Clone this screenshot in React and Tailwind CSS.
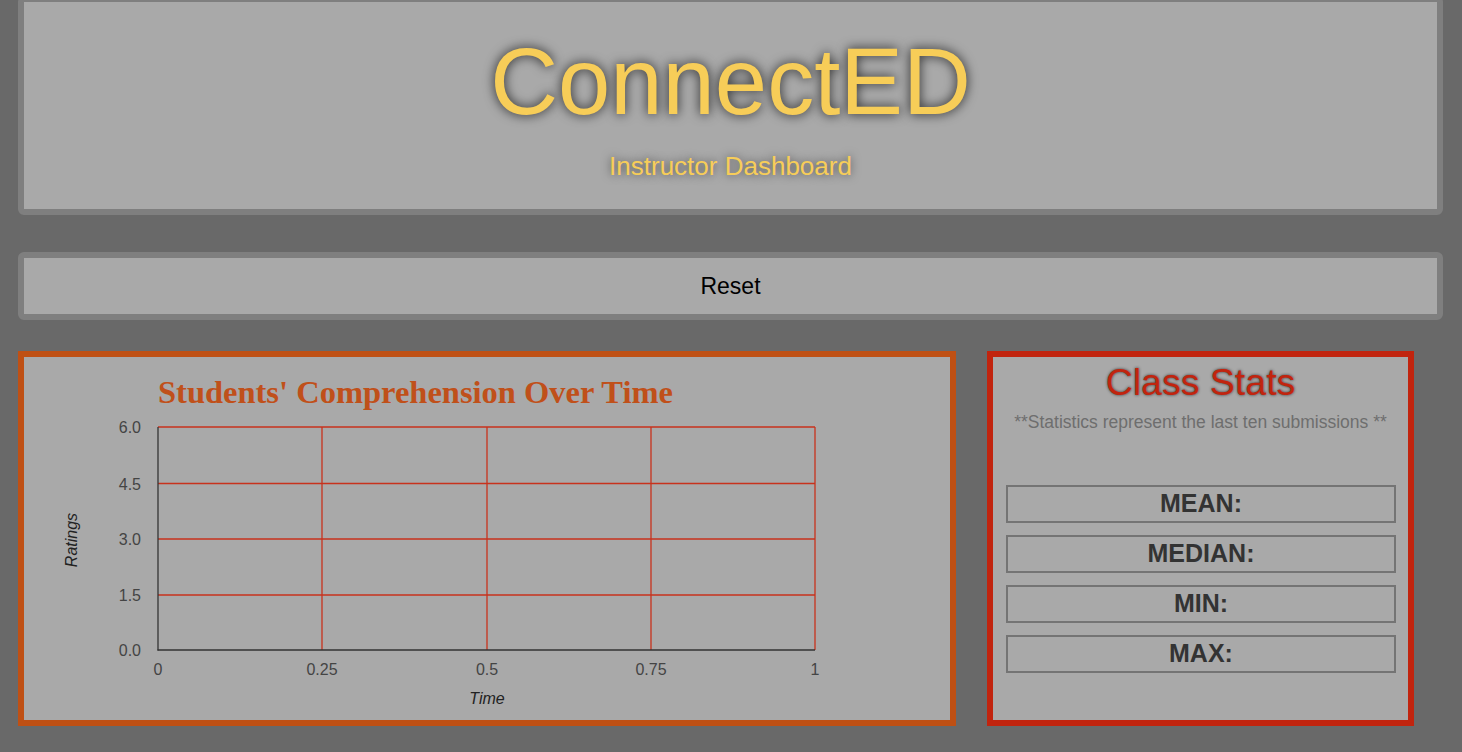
import React from 'react';

const yTicks = [
    { label: '6.0', y: 70 },
    { label: '4.5', y: 126.5 },
    { label: '3.0', y: 182 },
    { label: '1.5', y: 238 },
    { label: '0.0', y: 293 },
];

const xTicks = [
    { label: '0', x: 134 },
    { label: '0.25', x: 298 },
    { label: '0.5', x: 463 },
    { label: '0.75', x: 627 },
    { label: '1', x: 791 },
];

const ComprehensionChart = () => {
    return (
        <svg width="926" height="363" viewBox="0 0 926 363" className="block">
            <text x="134" y="46" fontFamily="'Liberation Serif', serif" fontWeight="bold" fontSize="32.5" fill="#c0501a">
                Students' Comprehension Over Time
            </text>

            {/* grid */}
            {yTicks.slice(0, 4).map((t) => (
                <line key={t.label} x1="134" x2="791" y1={t.y} y2={t.y} stroke="#c8321c" strokeWidth="1.3" />
            ))}
            {xTicks.slice(1).map((t) => (
                <line key={t.label} x1={t.x} x2={t.x} y1="70" y2="293" stroke="#c8321c" strokeWidth="1.3" />
            ))}

            {/* axes */}
            <line x1="134" x2="134" y1="70" y2="293.5" stroke="#333" strokeWidth="1.3" />
            <line x1="133.5" x2="791" y1="293" y2="293" stroke="#333" strokeWidth="1.3" />

            {yTicks.map((t) => (
                <text key={t.label} x="117" y={t.y + 6} textAnchor="end" fontFamily="'Liberation Sans', Arial, sans-serif" fontSize="16" fill="#444">
                    {t.label}
                </text>
            ))}
            {xTicks.map((t) => (
                <text key={t.label} x={t.x} y="318" textAnchor="middle" fontFamily="'Liberation Sans', Arial, sans-serif" fontSize="16" fill="#444">
                    {t.label}
                </text>
            ))}

            <text x="463" y="347" textAnchor="middle" fontFamily="'Liberation Sans', Arial, sans-serif" fontStyle="italic" fontSize="16" fill="#222">
                Time
            </text>
            <text
                x="0"
                y="0"
                transform="translate(53 183) rotate(-90)"
                textAnchor="middle"
                fontFamily="'Liberation Sans', Arial, sans-serif"
                fontStyle="italic"
                fontSize="16"
                fill="#222"
            >
                Ratings
            </text>
        </svg>
    );
};

const StatBox = ({ label }) => (
    <div className="h-[38px] border-2 border-[#747474] flex items-center justify-center text-[25px] font-bold text-[#333]">
        {label}
    </div>
);

const App = () => {
    return (
        <div className="bg-[#696969] min-h-screen h-[752px] overflow-hidden font-['Liberation_Sans',Arial,sans-serif]">
            {/* Header */}
            <div className="-mt-1 ml-[18px] mr-[19px] border-[6px] border-[#7f7f7f] rounded-md bg-[#a9a9a9] h-[219px] flex flex-col items-center">
                <h1 className="mt-[23px] text-[94px] leading-[114px] text-[#f7cd58] [text-shadow:0_0_12px_rgba(0,0,0,0.8)]">
                    ConnectED
                </h1>
                <p className="mt-[13px] text-[26px] leading-[28px] text-[#f7cd58] [text-shadow:0_0_10px_rgba(0,0,0,0.6)]">
                    Instructor Dashboard
                </p>
            </div>

            {/* Reset */}
            <div className="mt-[37px] ml-[18px] mr-[19px] border-[6px] border-[#7f7f7f] rounded-md bg-[#a9a9a9] h-[68px] flex items-center justify-center">
                <button className="text-[23px] text-black">Reset</button>
            </div>

            {/* Panels */}
            <div className="mt-[31px] ml-[18px] flex gap-[31px]">
                <div className="w-[938px] h-[375px] border-[6px] border-[#bf5014] bg-[#a9a9a9]">
                    <ComprehensionChart />
                </div>

                <div className="w-[427px] h-[375px] border-[6px] border-[#c1240e] bg-[#a9a9a9] flex flex-col items-center">
                    <h2 className="mt-[4px] text-[37.5px] leading-[42px] text-[#c1240e] [text-shadow:0_0_3px_rgba(40,40,40,0.9)]">
                        Class Stats
                    </h2>
                    <p className="mt-[9px] text-[17.5px] leading-[20px] text-[#6e6e6e]">
                        **Statistics represent the last ten submissions **
                    </p>
                    <div className="mt-[53px] w-full pl-[13px] pr-[12px] flex flex-col gap-[12px]">
                        <StatBox label="MEAN:" />
                        <StatBox label="MEDIAN:" />
                        <StatBox label="MIN:" />
                        <StatBox label="MAX:" />
                    </div>
                </div>
            </div>
        </div>
    );
};

export default App;
